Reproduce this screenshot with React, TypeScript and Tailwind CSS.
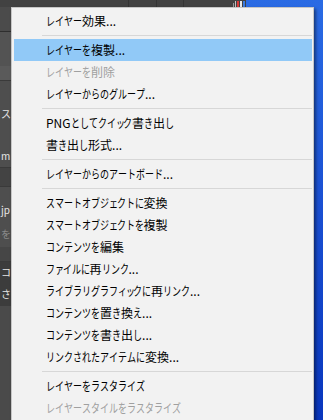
import React from 'react'

type MenuEntry =
  | { kind: 'item'; label: string; disabled?: boolean; active?: boolean }
  | { kind: 'sep' }

const menuEntries: MenuEntry[] = [
  { kind: 'item', label: 'レイヤー効果...' },
  { kind: 'sep' },
  { kind: 'item', label: 'レイヤーを複製...', active: true },
  { kind: 'item', label: 'レイヤーを削除', disabled: true },
  { kind: 'item', label: 'レイヤーからのグループ...' },
  { kind: 'sep' },
  { kind: 'item', label: 'PNG としてクイック書き出し' },
  { kind: 'item', label: '書き出し形式...' },
  { kind: 'sep' },
  { kind: 'item', label: 'レイヤーからのアートボード...' },
  { kind: 'sep' },
  { kind: 'item', label: 'スマートオブジェクトに変換' },
  { kind: 'item', label: 'スマートオブジェクトを複製' },
  { kind: 'item', label: 'コンテンツを編集' },
  { kind: 'item', label: 'ファイルに再リンク...' },
  { kind: 'item', label: 'ライブラリグラフィックに再リンク...' },
  { kind: 'item', label: 'コンテンツを置き換え...' },
  { kind: 'item', label: 'コンテンツを書き出し...' },
  { kind: 'item', label: 'リンクされたアイテムに変換...' },
  { kind: 'sep' },
  { kind: 'item', label: 'レイヤーをラスタライズ' },
  { kind: 'item', label: 'レイヤースタイルをラスタライズ', disabled: true },
]

// strips of the Photoshop window peeking out on the left of the menu
const panelRows = [
  { h: 'h-[24px]', bg: 'bg-[#4b4b4b]', text: '' },
  { h: 'h-[1px]', bg: 'bg-[#2e2e2e]', text: '' },
  { h: 'h-[34px]', bg: 'bg-[#535353]', text: '' },
  { h: 'h-[14px]', bg: 'bg-[#5a5a5a]', text: '' },
  { h: 'h-[1px]', bg: 'bg-[#3a3a3a]', text: '' },
  { h: 'h-[22px]', bg: 'bg-[#4e4e4e]', text: '' },
  { h: 'h-[22px]', bg: 'bg-[#4e4e4e]', text: 'ス' },
  { h: 'h-[20px]', bg: 'bg-[#4e4e4e]', text: '' },
  { h: 'h-[22px]', bg: 'bg-[#4e4e4e]', text: 'm' },
  { h: 'h-[1px]', bg: 'bg-[#3a3a3a]', text: '' },
  { h: 'h-[18px]', bg: 'bg-[#434343]', text: '' },
  { h: 'h-[1px]', bg: 'bg-[#3a3a3a]', text: '' },
  { h: 'h-[12px]', bg: 'bg-[#4e4e4e]', text: '' },
  { h: 'h-[22px]', bg: 'bg-[#4e4e4e]', text: 'jp' },
  { h: 'h-[26px]', bg: 'bg-[#4e4e4e]', text: 'を', dim: true },
  { h: 'h-[14px]', bg: 'bg-[#464646]', text: '' },
  { h: 'h-[1px]', bg: 'bg-[#3a3a3a]', text: '' },
  { h: 'h-[20px]', bg: 'bg-[#3c3c3c]', text: 'コ' },
  { h: 'h-[24px]', bg: 'bg-[#3c3c3c]', text: 'さ' },
  { h: 'flex-1', bg: 'bg-[#4a4a4a]', text: '' },
]

const smallKana = 'ァィゥェォャュョッ'

// Windows' UI font draws kana narrower than kanji; squeeze kana to match
function MenuLabel({ text }: { text: string }) {
  return (
    <>
      {Array.from(text).map((ch, i) => {
        const code = ch.charCodeAt(0)
        const isKana = code >= 0x3040 && code <= 0x30ff
        if (!isKana) return <span key={i}>{ch}</span>
        return (
          <span key={i} className={`inline-block overflow-visible ${smallKana.includes(ch) ? 'w-[7.5px]' : 'w-[9px]'}`}>
            <span className="inline-block origin-left scale-x-75">{ch}</span>
          </span>
        )
      })}
    </>
  )
}

export default function App() {
  return (
    <div className="relative flex h-[420px] w-[323px] overflow-hidden font-['Noto_Sans_CJK_JP','Noto_Sans',sans-serif]">
      <div className="flex w-[246px] flex-col">
        {/* options bar along the top */}
        <div className="flex h-[7px] items-stretch bg-[#424242]">
          <div className="w-[129px] border-r border-[#353535]" />
          <div className="w-[28px] border-r border-[#353535]" />
          <div className="w-[27px] border-r border-[#353535]" />
          <div className="flex flex-1 items-end justify-end gap-px pr-[1px]">
            <div className="h-[4px] w-px bg-[#9a9a9a]" />
            <div className="h-[6px] w-px bg-[#c0c0c0]" />
            <div className="h-[6px] w-[2px] bg-[#d83a3a]" />
            <div className="h-[6px] w-[2px] bg-[#e8e8e8]" />
            <div className="h-[6px] w-[2px] bg-[#3a7ae0]" />
          </div>
        </div>
        {panelRows.map((row, i) => (
          <div
            key={i}
            className={`${row.h} ${row.bg} flex items-center overflow-hidden whitespace-nowrap text-[10px] leading-none ${
              'dim' in row && row.dim ? 'text-[#8a8a8a]' : 'text-[#e6e6e6]'
            }`}
          >
            {row.text ? <span className="pl-px">{row.text}</span> : null}
          </div>
        ))}
      </div>
      <div className="flex flex-1 flex-col bg-gradient-to-b from-[#2a6be4] via-[#1a4fd2] to-[#0936bd]" />

      <div className="absolute left-[11px] top-[7px] w-[303px] border border-[#c6c6c6] bg-[#f2f2f2] pb-[2px] pl-[2px] pr-[1px] pt-[2px] shadow-[2px_2px_3px_rgba(0,0,0,0.45)]">
        {menuEntries.map((entry, i) =>
          entry.kind === 'sep' ? (
            <div key={i} className="h-[7px] pl-[28px] pt-[3px]">
              <div className="h-px bg-[#d7d7d7]" />
            </div>
          ) : (
            <div
              key={i}
              className={`flex h-[22px] items-center whitespace-nowrap pl-[32px] text-[12px] leading-none ${
                entry.active ? 'bg-[#91c9f7]' : ''
              } ${entry.disabled ? 'text-[#a0a0a0]' : 'text-[#000000]'}`}
            >
              <MenuLabel text={entry.label} />
            </div>
          ),
        )}
      </div>
    </div>
  )
}
